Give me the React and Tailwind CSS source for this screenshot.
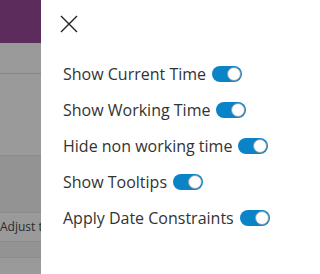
import React, { useState } from 'react';

const options = [
  'Show Current Time',
  'Show Working Time',
  'Hide non working time',
  'Show Tooltips',
  'Apply Date Constraints',
];

const Toggle = ({ on, onClick }) => (
  <button
    onClick={onClick}
    className={`relative w-[30px] h-[16px] rounded-full shrink-0 ${on ? 'bg-[#0a84c6]' : 'bg-gray-300'}`}
  >
    <span
      className={`absolute top-[1px] w-[14px] h-[14px] rounded-full bg-white border border-[#8a9aa5] ${on ? 'right-[1px]' : 'left-[1px]'}`}
    />
  </button>
);

export default function App() {
  const [values, setValues] = useState(options.map(() => true));

  return (
    <div className="flex w-[320px] h-[274px] overflow-hidden font-['Open_Sans',sans-serif]">
      {/* dimmed background app */}
      <div className="w-[41px] shrink-0 flex flex-col overflow-hidden bg-[#9a9a9a]">
        <div className="h-[43px] bg-[#5b2c5c]" />
        <div className="h-[31px] border-b border-[#858585]" />
        <div className="h-[82px] border-b border-[#8c8c8c]" />
        <div className="h-[57px] bg-[#939393] border-b border-[#8c8c8c]" />
        <div className="h-[29px] flex items-center border-b border-[#8c8c8c] text-[12px] text-[#2a2a2a] whitespace-nowrap overflow-hidden">
          Adjust t
        </div>
        <div className="h-[16px] bg-[#939393] border-b border-[#8c8c8c]" />
        <div className="flex-1" />
      </div>

      {/* settings panel */}
      <div className="flex-1 bg-white pl-[22px] pt-[15px]">
        <button className="w-[18px] h-[18px] -ml-[3px] text-[#222]">
          <svg viewBox="0 0 18 18" className="w-[18px] h-[18px]" fill="none" stroke="currentColor" strokeWidth="1.4">
            <path d="M1 1 L17 17 M17 1 L1 17" />
          </svg>
        </button>
        <div className="mt-[25px] flex flex-col gap-[16px]">
          {options.map((label, i) => (
            <div key={label} className="flex items-center gap-[6px] h-[20px]">
              <span className="text-[16px] text-[#333] whitespace-nowrap">{label}</span>
              <Toggle
                on={values[i]}
                onClick={() => setValues(v => v.map((x, j) => (j === i ? !x : x)))}
              />
            </div>
          ))}
        </div>
      </div>
    </div>
  );
}
